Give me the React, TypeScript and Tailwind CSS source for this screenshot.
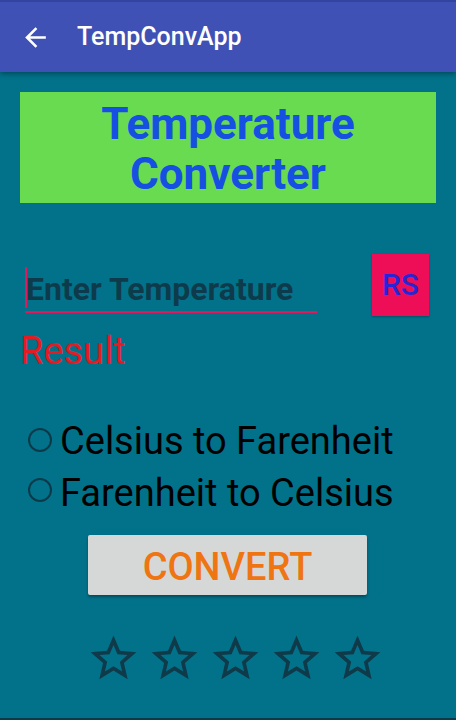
import React from "react";

const Star = () => (
  <svg viewBox="0 0 24 24" className="w-[55px] h-[55px]" fill="#0E3A4A">
    <path
      fillRule="evenodd"
      d="M22 9.24l-7.19-.62L12 2 9.19 8.63 2 9.24l5.46 4.73L5.82 21 12 17.27 18.18 21l-1.63-7.03L22 9.24zM12 15.4l-3.76 2.27 1-4.28-3.32-2.88 4.38-.38L12 6.1l1.71 4.04 4.38.38-3.32 2.88 1 4.28L12 15.4z"
    />
  </svg>
);

export default function App() {
  return (
    <div
      className="w-[456px] h-[720px] bg-[#02728A] flex flex-col overflow-hidden"
      style={{ fontFamily: "Roboto, 'Noto Sans', sans-serif" }}
    >
      <div className="h-[72px] bg-[#3F51B5] border-t-[2px] border-[#33449f] flex items-center shadow-[0_2px_5px_rgba(0,0,0,0.35)] relative z-10">
        <svg viewBox="0 0 24 24" className="w-[31px] h-[31px] ml-[20px]" fill="#ffffff">
          <path d="M20 11H7.83l5.59-5.59L12 4l-8 8 8 8 1.41-1.41L7.83 13H20v-2z" />
        </svg>
        <span className="ml-[26px] text-[25px] leading-[30px] font-medium text-white">TempConvApp</span>
      </div>

      <div className="px-[20px] flex flex-col">
        <div className="mt-[20px] h-[111px] bg-[#68DB51] flex flex-col items-center pt-[7px]">
          <span className="text-[44px] leading-[50px] font-bold text-[#1650E2]">Temperature</span>
          <span className="text-[44px] leading-[50px] font-bold text-[#1650E2]">Converter</span>
        </div>

        <div className="mt-[51px] flex items-start">
          <div className="ml-[5px] mt-[13px] w-[292px] flex flex-col">
            <div className="flex items-start h-[41px]">
              <div className="w-[2px] h-[41px] bg-[#E0185C]" />
              <span className="mt-[3px] -ml-[1px] text-[32px] leading-[38px] font-bold text-[#0E3B4B]">
                Enter Temperature
              </span>
            </div>
            <div className="mt-[3px] h-[2px] bg-[#E0185C]" />
          </div>
          <div className="ml-auto mr-[7px] w-[57px] h-[62px] bg-[#EE0E58] flex items-center justify-center shadow-[0_1px_2px_rgba(0,0,0,0.3)]">
            <span className="text-[30px] leading-[34px] font-medium text-[#2626D6]">RS</span>
          </div>
        </div>

        <div className="mt-[13px] text-[38px] leading-[44px] text-[#E31B23]">Result</div>

        <div className="mt-[46px] flex flex-col gap-[8px]">
          <div className="flex items-start h-[44px]">
            <div className="mt-[9px] ml-[8px] w-[24px] h-[24px] rounded-full border-[2px] border-[#0C3A49]" />
            <span className="ml-[8px] text-[38px] leading-[44px] text-black">Celsius to Farenheit</span>
          </div>
          <div className="flex items-start h-[44px]">
            <div className="mt-[7px] ml-[8px] w-[24px] h-[24px] rounded-full border-[2px] border-[#0C3A49]" />
            <span className="ml-[8px] text-[38px] leading-[44px] text-black">Farenheit to Celsius</span>
          </div>
        </div>

        <div className="mt-[20px] ml-[68px] w-[279px] h-[60px] bg-[#D6D8D8] rounded-[2px] shadow-[0_2px_3px_rgba(0,0,0,0.35)] flex items-center justify-center pt-[4px]">
          <span className="text-[38px] leading-[44px] font-medium text-[#EE7512]">CONVERT</span>
        </div>

        <div className="mt-[36px] ml-[66px] flex gap-[6px]">
          <Star />
          <Star />
          <Star />
          <Star />
          <Star />
        </div>
      </div>

      <div className="mt-auto h-[2px] bg-[#0B3B4A]" />
    </div>
  );
}
